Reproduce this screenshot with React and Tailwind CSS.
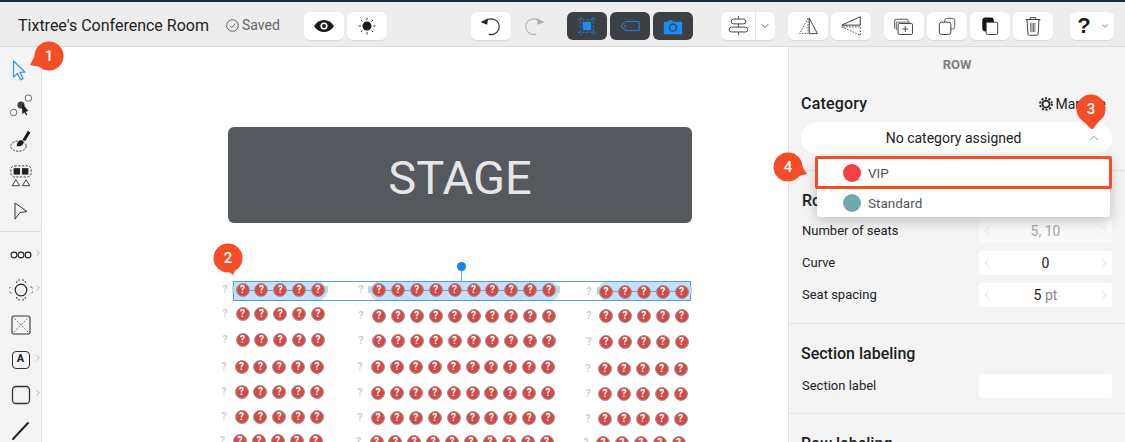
import React from "react";
import { ChevronDown, ChevronUp, ChevronLeft, ChevronRight } from "lucide-react";

const OX = 42, OY = 47;

function HBtn({ children, dark, plain, w = "w-10" }) {
  const c = plain ? "" : dark ? "bg-[#3c3f43]" : "bg-white shadow-[0_1px_1px_rgba(0,0,0,0.08)]";
  return <div className={`${w} h-7 rounded-md flex items-center justify-center shrink-0 ${c}`}>{children}</div>;
}

const Ic = ({ children, s = 24, v = 24 }) => <svg width={s} height={s} viewBox={`0 0 ${v} ${v}`}>{children}</svg>;

const icons = {
  eye: <Ic><path d="M2 12c2.500-4 6-6 10-6s7.500 2 10 6c-2.500 4-6 6-10 6s-7.500-2-10-6z" fill="#1c1c1c" /><circle cx="12" cy="12" r="3.600" fill="#fff" /><circle cx="12" cy="12" r="2" fill="#1c1c1c" /></Ic>,
  sun: <Ic><circle cx="12" cy="12" r="4.500" fill="#1c1c1c" /><path d="M12 3.500v2.500M12 18v2.500M3.500 12H6M18 12h2.500M6 6l1.500 1.500M16.500 16.500L18 18M6 18l1.500-1.500M16.500 7.500L18 6" stroke="#333" strokeWidth="1" /></Ic>,
  undo: <Ic s={28}><path d="M7 7.500c5-3.500 12-1 12 5 0 5-5 8-9 6.500" fill="none" stroke="#333" strokeWidth="1" /><path d="M3 8.500l6.500-3-.8 5.500z" fill="#222" /></Ic>,
  redo: <Ic s={28}><path d="M17 7.500c-5-3.500-12-1-12 5 0 5 5 8 9 6.500" fill="none" stroke="#b5b5b5" strokeWidth="1" /><path d="M21 8.500l-6.500-3 .8 5.500z" fill="#aaa" /></Ic>,
  select: <Ic s={20}><rect x="7" y="7" width="10" height="10" fill="#1d8df5" /><path d="M4.500 1v22M19.500 1v22M1 4.500h22M1 19.500h22" stroke="#1d8df5" strokeWidth="1" strokeDasharray="3 2" fill="none" /></Ic>,
  tag: <Ic s={20}><path d="M7 6.500h16v11H7l-6-5.500z" fill="none" stroke="#1d8df5" strokeWidth="1.100" /><circle cx="6" cy="12" r="1" fill="none" stroke="#1d8df5" strokeWidth="0.800" /></Ic>,
  camera: <Ic s={20}><path d="M1 7h5l1-2h4l1 2h11v15H1z" fill="#1d8df5" /><circle cx="12" cy="14" r="5" fill="#3c3f43" /><circle cx="12" cy="14" r="3.400" fill="#1d8df5" /></Ic>,
  align: <Ic s={21} v={26}><path d="M13 1v24" stroke="#333" strokeWidth="1" /><rect x="4" y="5" width="18" height="6" rx="3" fill="#fff" stroke="#333" strokeWidth="1.100" /><rect x="1.500" y="15" width="23" height="6" rx="3" fill="#fff" stroke="#333" strokeWidth="1.100" /></Ic>,
  flipH: <Ic s={21} v={26}><path d="M12.500 4L2 23h10.500z" fill="none" stroke="#333" strokeWidth="1" strokeDasharray="2 1.500" /><path d="M14 4l10 19H14z" fill="none" stroke="#333" strokeWidth="1.100" /></Ic>,
  flipV: <Ic s={22} v={26}><path d="M2 12L24 2v10z" fill="none" stroke="#333" strokeWidth="1.100" /><path d="M2 14l22 10V14z" fill="none" stroke="#333" strokeWidth="1" strokeDasharray="2 1.500" /></Ic>,
  addCopy: <Ic s={22} v={26}><path d="M2 16V7a2 2 0 0 1 2-2h12a2 2 0 0 1 2 2v1" fill="none" stroke="#333" strokeWidth="1" /><path d="M4 18V8.500h16" fill="none" stroke="#333" strokeWidth="0.800" /><rect x="6" y="10" width="17" height="13" rx="1.500" fill="#fff" stroke="#333" strokeWidth="1.100" /><path d="M14.500 13v7M11 16.500h7" stroke="#333" strokeWidth="1" /></Ic>,
  copy: <Ic s={20} v={26}><path d="M10 8V6a3 3 0 0 1 3-3h7a3 3 0 0 1 3 3v8a3 3 0 0 1-3 3h-2" fill="none" stroke="#444" strokeWidth="1.100" /><rect x="3" y="8" width="15" height="16" rx="3" fill="#fff" stroke="#333" strokeWidth="1.200" /></Ic>,
  paste: <Ic s={20} v={26}><rect x="3" y="2" width="15" height="18" rx="4" fill="#151515" /><rect x="8" y="8" width="15" height="16" rx="1.500" fill="#fff" stroke="#333" strokeWidth="1.200" /></Ic>,
  trash: <Ic s={24} v={26}><path d="M5 6h16M10 6V4h6v2" fill="none" stroke="#333" strokeWidth="1" /><path d="M6.500 6l1 16a1.500 1.500 0 0 0 1.500 1h8a1.500 1.500 0 0 0 1.500-1l1-16" fill="none" stroke="#333" strokeWidth="1" /><path d="M10.500 9.500v10M12 9.500v10M13.500 9.500v10M15 9.500v10" stroke="#444" strokeWidth="0.800" /></Ic>,
};

const tool = {
  arrow: <Ic><path d="M6.500 3l11.500 11-5 .4 3 6.200-2.500 1.200-3-6.200-4 3.400z" transform="translate(-2 -1)" fill="none" stroke="#3d96f5" strokeWidth="1.300" strokeLinejoin="round" /></Ic>,
  nodes: <Ic s={24} v={26}><circle cx="21" cy="4.500" r="3.500" fill="#fff" stroke="#333" strokeWidth="0.800" /><circle cx="5" cy="20" r="3.500" fill="#fff" stroke="#333" strokeWidth="0.800" /><circle cx="13" cy="12" r="3.500" fill="#444" stroke="#333" strokeWidth="0.800" /><path d="M14 10l.5 12 2.200-2.300 1.800 3.300 1.300-.7-1.800-3.200 3-.6z" fill="#1a1a1a" /></Ic>,
  brush: <Ic s={24} v={28}><ellipse cx="11" cy="20" rx="9" ry="6" fill="none" stroke="#222" strokeWidth="1" strokeDasharray="2.500 1.500" /><path d="M9 20c0-5 3-7 6-7l2 2c0 4-3 6-8 5z" fill="#1a1a1a" /><path d="M15.500 13L22 2l3 2-6 10z" fill="#1a1a1a" /></Ic>,
  group: <Ic s={24} v={26}><rect x="2" y="2" width="22" height="12" rx="4" fill="none" stroke="#333" strokeWidth="1" strokeDasharray="2.500 1.500" /><rect x="5" y="4.500" width="7" height="7" fill="#222" /><rect x="14" y="4.500" width="7" height="7" fill="#222" /><path d="M7.500 17l4 6.500h-8zM18.500 17l4 6.500h-8z" fill="none" stroke="#333" strokeWidth="1" /></Ic>,
  node: <Ic><path d="M6 4L18 12.500 11 13.500 6 20z" fill="none" stroke="#333" strokeWidth="1" strokeLinejoin="round" /></Ic>,
  row: <Ic><circle cx="5" cy="12" r="2.900" fill="none" stroke="#222" strokeWidth="1.100" /><circle cx="12" cy="12" r="2.900" fill="none" stroke="#222" strokeWidth="1.100" /><circle cx="19" cy="12" r="2.900" fill="none" stroke="#222" strokeWidth="1.100" /></Ic>,
  table: <Ic><circle cx="12" cy="12" r="5.800" fill="none" stroke="#222" strokeWidth="1.200" /><g fill="none" stroke="#333" strokeWidth="1" strokeDasharray="2 1"><path d="M7.500 5a3 3 0 0 1 3.500-3M13 2A3 3 0 0 1 16.500 5M2.500 15a3 3 0 0 1 0-6M21.500 9a3 3 0 0 1 0 6M7.500 19a3 3 0 0 0 3.500 3M13 22A3 3 0 0 0 16.500 19" /></g></Ic>,
  image: <Ic><rect x="3" y="3" width="18" height="18" rx="1.500" fill="none" stroke="#333" strokeWidth="1.100" /><path d="M3 3l18 18M21 3L3 21" stroke="#555" strokeWidth="0.800" strokeDasharray="2 1.500" /></Ic>,
  rect: <Ic><rect x="3.500" y="3.500" width="17" height="17" rx="3.500" fill="none" stroke="#333" strokeWidth="1.300" /></Ic>,
  line: <Ic><path d="M4 21L19 5" stroke="#222" strokeWidth="2" strokeLinecap="round" /></Ic>,
};

function Tool({ children, more }) {
  return (
    <div className="relative h-[35px] flex items-center justify-center">
      {children}
      {more && <ChevronRight size={10} strokeWidth={1.200} color="#777" className="absolute right-[-2px] top-[11px]" />}
    </div>
  );
}

function LeftBar() {
  return (
    <aside className="w-[42px] shrink-0 bg-[#f4f4f4] border-r border-[#e6e6e6] pt-[6px]">
      <Tool>{tool.arrow}</Tool>
      <Tool>{tool.nodes}</Tool>
      <Tool>{tool.brush}</Tool>
      <Tool>{tool.group}</Tool>
      <Tool>{tool.node}</Tool>
      <div className="h-px bg-[#dddddd] mt-[3px] mb-[5px]" />
      <Tool more>{tool.row}</Tool>
      <Tool more>{tool.table}</Tool>
      <Tool>{tool.image}</Tool>
      <Tool more>
        <div className="w-[18px] h-[18px] rounded-[4px] border border-[#333] flex items-center justify-center text-[11px] font-bold text-[#222]">A</div>
      </Tool>
      <Tool more>{tool.rect}</Tool>
      <Tool>{tool.line}</Tool>
    </aside>
  );
}

function Header() {
  return (
    <header className="h-[45px] shrink-0 bg-[#ededed] border-b border-[#dcdcdc] flex items-center pl-[18px] pt-[3px]">
      <span className="text-[16px] text-[#222] w-[190px] whitespace-nowrap">Tixtree's Conference Room</span>
      <svg className="ml-[18px]" width="13" height="13" viewBox="0 0 13 13"><circle cx="6.500" cy="6.500" r="5.800" fill="none" stroke="#555" strokeWidth="0.900" /><path d="M3.800 6.700l2 2 3.400-4" fill="none" stroke="#555" strokeWidth="0.900" /></svg>
      <span className="ml-[3px] text-[14px] text-[#666] w-[38px]">Saved</span>
      <div className="ml-[24px] flex gap-[3px]"><HBtn>{icons.eye}</HBtn><HBtn>{icons.sun}</HBtn></div>
      <div className="ml-[84px] flex gap-[3px]"><HBtn>{icons.undo}</HBtn><HBtn plain>{icons.redo}</HBtn></div>
      <div className="ml-[13px] flex gap-[3px]"><HBtn dark>{icons.select}</HBtn><HBtn dark>{icons.tag}</HBtn><HBtn dark>{icons.camera}</HBtn></div>
      <div className="ml-[28px] w-[54px] h-7 rounded-md bg-white flex items-center shadow-[0_1px_1px_rgba(0,0,0,0.08)]">
        <div className="w-[35px] h-7 flex items-center justify-center border-r border-[#e8e8e8]">{icons.align}</div>
        <ChevronDown size={12} strokeWidth={1.500} color="#333" className="ml-[3px]" />
      </div>
      <div className="ml-[13px] flex gap-[3px]"><HBtn>{icons.flipH}</HBtn><HBtn>{icons.flipV}</HBtn></div>
      <div className="ml-[13px] flex gap-[3px]"><HBtn>{icons.addCopy}</HBtn><HBtn>{icons.copy}</HBtn><HBtn>{icons.paste}</HBtn><HBtn>{icons.trash}</HBtn></div>
      <div className="ml-[17px] w-[44px] h-7 rounded-md bg-white flex items-center justify-center gap-[9px] pl-[3px] shadow-[0_1px_1px_rgba(0,0,0,0.08)]">
        <span className="text-[22px] font-bold text-[#1c1c1c] leading-none" style={{ fontFamily: "'Liberation Sans', sans-serif" }}>?</span>
        <ChevronDown size={10} strokeWidth={1.500} color="#333" />
      </div>
    </header>
  );
}

function Seat({ x, y }) {
  return (
    <div className="absolute w-[14px] h-[14px] rounded-full bg-[#d34a47] border border-[#9c9c9c] flex items-center justify-center text-white text-[10px] font-bold leading-none" style={{ left: x - OX - 7, top: y - OY - 7 }}>?</div>
  );
}
function Q({ x, y }) {
  return <span className="absolute w-[8px] text-center text-[#d0d0d0] text-[11px] font-bold leading-none" style={{ left: x - OX - 4, top: y - OY - 6 }}>?</span>;
}

const ROWS = [
  [242.5, 290, 379, 290, 606, 292],
  [242.5, 314, 379, 315.5, 606, 316],
  [242.5, 340, 379, 341, 606, 341.5],
  [241.5, 366.5, 378, 367, 605, 368.5],
  [241.5, 392, 378, 392.5, 605, 394],
  [241.5, 417, 378, 418, 605, 419],
  [240, 441, 376.5, 442, 603, 443],
];

function Canvas() {
  return (
    <main className="relative flex-1 bg-white overflow-hidden">
      <div className="absolute left-[186px] top-[80px] w-[464px] h-[96px] rounded-md bg-[#55585c] flex items-center justify-center pt-[4px] text-[47px] text-[#e6e6e6] leading-none">STAGE</div>

      {/* selection */}
      <div className="absolute left-[191px] top-[234px] w-[94px] h-[20px] bg-[#c5e0fb] rounded-r-[10px]" />
      <div className="absolute left-[328px] top-[234px] w-[189px] h-[20px] bg-[#c5e0fb] rounded-[10px]" />
      <div className="absolute left-[556px] top-[234px] w-[93px] h-[20px] bg-[#c5e0fb] rounded-l-[10px]" />
      <div className="absolute left-[191px] top-[234px] w-[458px] h-[20px] border border-[#4a9df0]" />
      <div className="absolute left-[190px] top-[239px] w-[6px] h-[7px] bg-[#b5dbe8]" />
      <div className="absolute left-[279px] top-[239px] w-[7px] h-[7px] bg-[#b5dbe8]" />
      <div className="absolute left-[326px] top-[239px] w-[7px] h-[7px] bg-[#b5dbe8]" />
      <div className="absolute left-[511px] top-[239px] w-[7px] h-[7px] bg-[#b5dbe8]" />
      <div className="absolute left-[555px] top-[240px] w-[7px] h-[7px] bg-[#b5dbe8]" />
      <div className="absolute left-[644px] top-[240px] w-[6px] h-[7px] bg-[#b5dbe8]" />
      <div className="absolute left-[200px] top-[243px] w-[76px] h-px bg-[#5fa5ee]" />
      <div className="absolute left-[337px] top-[243px] w-[170px] h-px bg-[#5fa5ee]" />
      <div className="absolute left-[564px] top-[244px] w-[76px] h-px bg-[#5fa5ee]" />
      <div className="absolute left-[419px] top-[220px] w-px h-[14px] bg-[#6aaef0]" />
      <div className="absolute left-[415px] top-[215px] w-[9px] h-[9px] rounded-full bg-[#1283f5]" />

      {ROWS.map((r, i) => (
        <React.Fragment key={i}>
          <Q x={r[0] - 17.5} y={r[1]} />
          <Q x={r[2] - 18} y={r[3]} />
          <Q x={r[4] - 17} y={r[5]} />
          {[0, 1, 2, 3, 4].map((k) => <Seat key={"l" + k} x={r[0] + k * 18.9} y={r[1]} />)}
          {[0, 1, 2, 3, 4, 5, 6, 7, 8, 9].map((k) => <Seat key={"m" + k} x={r[2] + k * 18.9} y={r[3]} />)}
          {[0, 1, 2, 3, 4].map((k) => <Seat key={"r" + k} x={r[4] + k * 18.9} y={r[5]} />)}
        </React.Fragment>
      ))}
    </main>
  );
}

function Stepper({ label, value, unit, disabled }) {
  return (
    <div className="h-[24px] flex items-center justify-between mb-[8px]">
      <span className="text-[13px] text-[#222]">{label}</span>
      <div className={`w-[133px] h-[24px] rounded-[3px] flex items-center justify-between px-[1px] text-[14px] ${disabled ? "bg-[#f9f9f9] text-[#a8a8a8]" : "bg-white text-[#222]"}`}>
        <ChevronLeft size={14} strokeWidth={1} color={disabled ? "#dcdcdc" : "#b5b5b5"} />
        <span>{value}{unit && <span className="text-[#888]"> {unit}</span>}</span>
        <ChevronRight size={14} strokeWidth={1} color={disabled ? "#dcdcdc" : "#b5b5b5"} />
      </div>
    </div>
  );
}

function Panel() {
  return (
    <aside className="relative w-[337px] shrink-0 bg-[#f4f4f4] border-l border-[#e3e3e3] overflow-hidden">
      <div className="h-[34px] flex items-center justify-center pt-[2px] text-[13px] font-bold text-[#808080]">ROW</div>
      <section className="h-[90px] border-b border-[#e3e3e3] pl-[12px] pr-[13px] pt-[13px]">
        <div className="flex items-center justify-between h-[20px]">
          <span className="text-[16px] font-medium text-[#1c1c1c] tracking-[0.2px]">Category</span>
          <span className="flex items-center gap-[3px] text-[14px] text-[#222] mr-[6px]">
            <svg width="14" height="14" viewBox="0 0 24 24"><circle cx="12" cy="12" r="6" fill="none" stroke="#222" strokeWidth="3" /><circle cx="12" cy="12" r="10" fill="none" stroke="#222" strokeWidth="3.500" strokeDasharray="3.500 2.800" /></svg>
            Manage
          </span>
        </div>
        <div className="relative mt-[8px] h-[32px] rounded-full bg-white flex items-center justify-center text-[14px] text-[#222] pr-[6px]">
          No category assigned
          <ChevronUp size={14} strokeWidth={1} color="#555" className="absolute right-[11px] top-[9px]" />
        </div>
      </section>
      <section className="h-[153px] border-b border-[#e3e3e3] pl-[13px] pr-[13px] pt-[18px]">
        <div className="h-[20px] text-[16px] font-medium text-[#1c1c1c]">Row</div>
        <div className="mt-[10px]">
          <Stepper label="Number of seats" value="5, 10" disabled />
          <Stepper label="Curve" value="0" />
          <Stepper label="Seat spacing" value="5" unit="pt" />
        </div>
      </section>
      <section className="h-[90px] border-b border-[#e3e3e3] pl-[12px] pr-[13px] pt-[18px]">
        <div className="h-[20px] text-[16px] font-medium text-[#1c1c1c]">Section labeling</div>
        <div className="mt-[12px] h-[24px] flex items-center justify-between pl-[1px]">
          <span className="text-[13px] text-[#222]">Section label</span>
          <div className="w-[133px] h-[24px] rounded-[3px] bg-white" />
        </div>
      </section>
      <div className="pl-[12px] pt-[18px] text-[16px] font-medium text-[#1c1c1c]">Row labeling</div>

      {/* dropdown */}
      <div className="absolute left-[28px] top-[109px] w-[293px] h-[61px] rounded-[4px] bg-white shadow-[0_4px_14px_rgba(0,0,0,0.22)] text-[13.500px] text-[#555]">
        <div className="h-[34px] flex items-center pl-[26px] gap-[7px]"><span className="w-[18px] h-[18px] rounded-full bg-[#f43f46]" />VIP</div>
        <div className="h-[26px] flex items-center pl-[26px] gap-[7px]"><span className="w-[18px] h-[18px] rounded-full bg-[#6fabad]" />Standard</div>
      </div>
      <div className="absolute left-[26px] top-[109px] w-[297px] h-[33px] border-[3px] border-[#f54d26] rounded-[2px]" />
    </aside>
  );
}

function Badge({ n, x, y, tip }) {
  return (
    <div className="absolute w-[40px] h-[40px] flex items-center justify-center text-white text-[15px] font-medium" style={{ left: x - 20, top: y - 20 }}>
      <svg className="absolute inset-0" width="40" height="40" viewBox="0 0 40 40">
        <circle cx="20" cy="20" r="14.500" fill="#f54d26" />
        <path d={tip} fill="#f54d26" />
      </svg>
      <span className="relative">{n}</span>
    </div>
  );
}

export default function App() {
  return (
    <div className="relative w-[1125px] h-[442px] overflow-hidden flex flex-col bg-white" style={{ fontFamily: "Roboto, sans-serif" }}>
      <div className="h-[2px] shrink-0 bg-[#1c2a44]" />
      <Header />
      <div className="flex-1 flex min-h-0">
        <LeftBar />
        <Canvas />
        <Panel />
      </div>
      <Badge n="1" x={49} y={56} tip="M1 29 L12 8 L22 33 Z" />
      <Badge n="2" x={228} y={258} tip="M6 22 L25 37 L34 16 Z" />
      <Badge n="3" x={1091} y={109} tip="M8 28 L21 41 L33 26 Z" />
      <Badge n="4" x={788} y={167} tip="M14 33 L39 27 L26 6 Z" />
    </div>
  );
}
